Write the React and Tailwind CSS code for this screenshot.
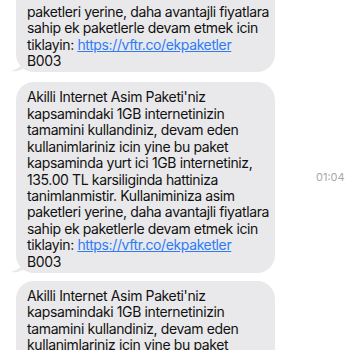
import React from "react";

const lines = [
  "Akilli Internet Asim Paketi'niz",
  "kapsamindaki 1GB internetinizin",
  "tamamini kullandiniz, devam eden",
  "kullanimlariniz icin yine bu paket",
  "kapsaminda yurt ici 1GB internetiniz,",
  "135.00 TL karsiliginda hattiniza",
  "tanimlanmistir. Kullaniminiza asim",
  "paketleri yerine, daha avantajli fiyatlara",
  "sahip ek paketlerle devam etmek icin",
];

function Tail() {
  return (
    <svg className="absolute -left-[5px] bottom-0" width="16" height="18" viewBox="0 0 16 18">
      <path d="M16 0 C14 8 10 14 0 17 C6 18 12 16 16 12 Z" fill="#e9e9eb" />
    </svg>
  );
}

function Bubble() {
  return (
    <div className="relative w-[259px] rounded-[18px] bg-[#e9e9eb] pl-[11px] pr-[6px] pt-[7px] pb-[3px] text-[14px] leading-[16.4px] tracking-[-0.38px] text-[#111] whitespace-nowrap">
      <Tail />
      <div className="relative">
        {lines.map((l) => (
          <div key={l}>{l}</div>
        ))}
        <div>
          tiklayin: <span className="text-[#2f7cf6] underline">https://vftr.co/ekpaketler</span>
        </div>
        <div>B003</div>
      </div>
    </div>
  );
}

export default function App() {
  return (
    <div className="h-[350px] w-[350px] overflow-hidden bg-white" style={{ fontFamily: "Inter, 'Liberation Sans', Arial, sans-serif" }}>
      <div className="mt-[-118px] flex flex-col pl-[16px]">
        <Bubble />
        <div className="mt-[10px] flex items-center">
          <Bubble />
          <div className="ml-[41px] text-[11px] text-[#a8a8a8]">01:04</div>
        </div>
        <div className="mt-[8px]">
          <Bubble />
        </div>
      </div>
    </div>
  );
}
